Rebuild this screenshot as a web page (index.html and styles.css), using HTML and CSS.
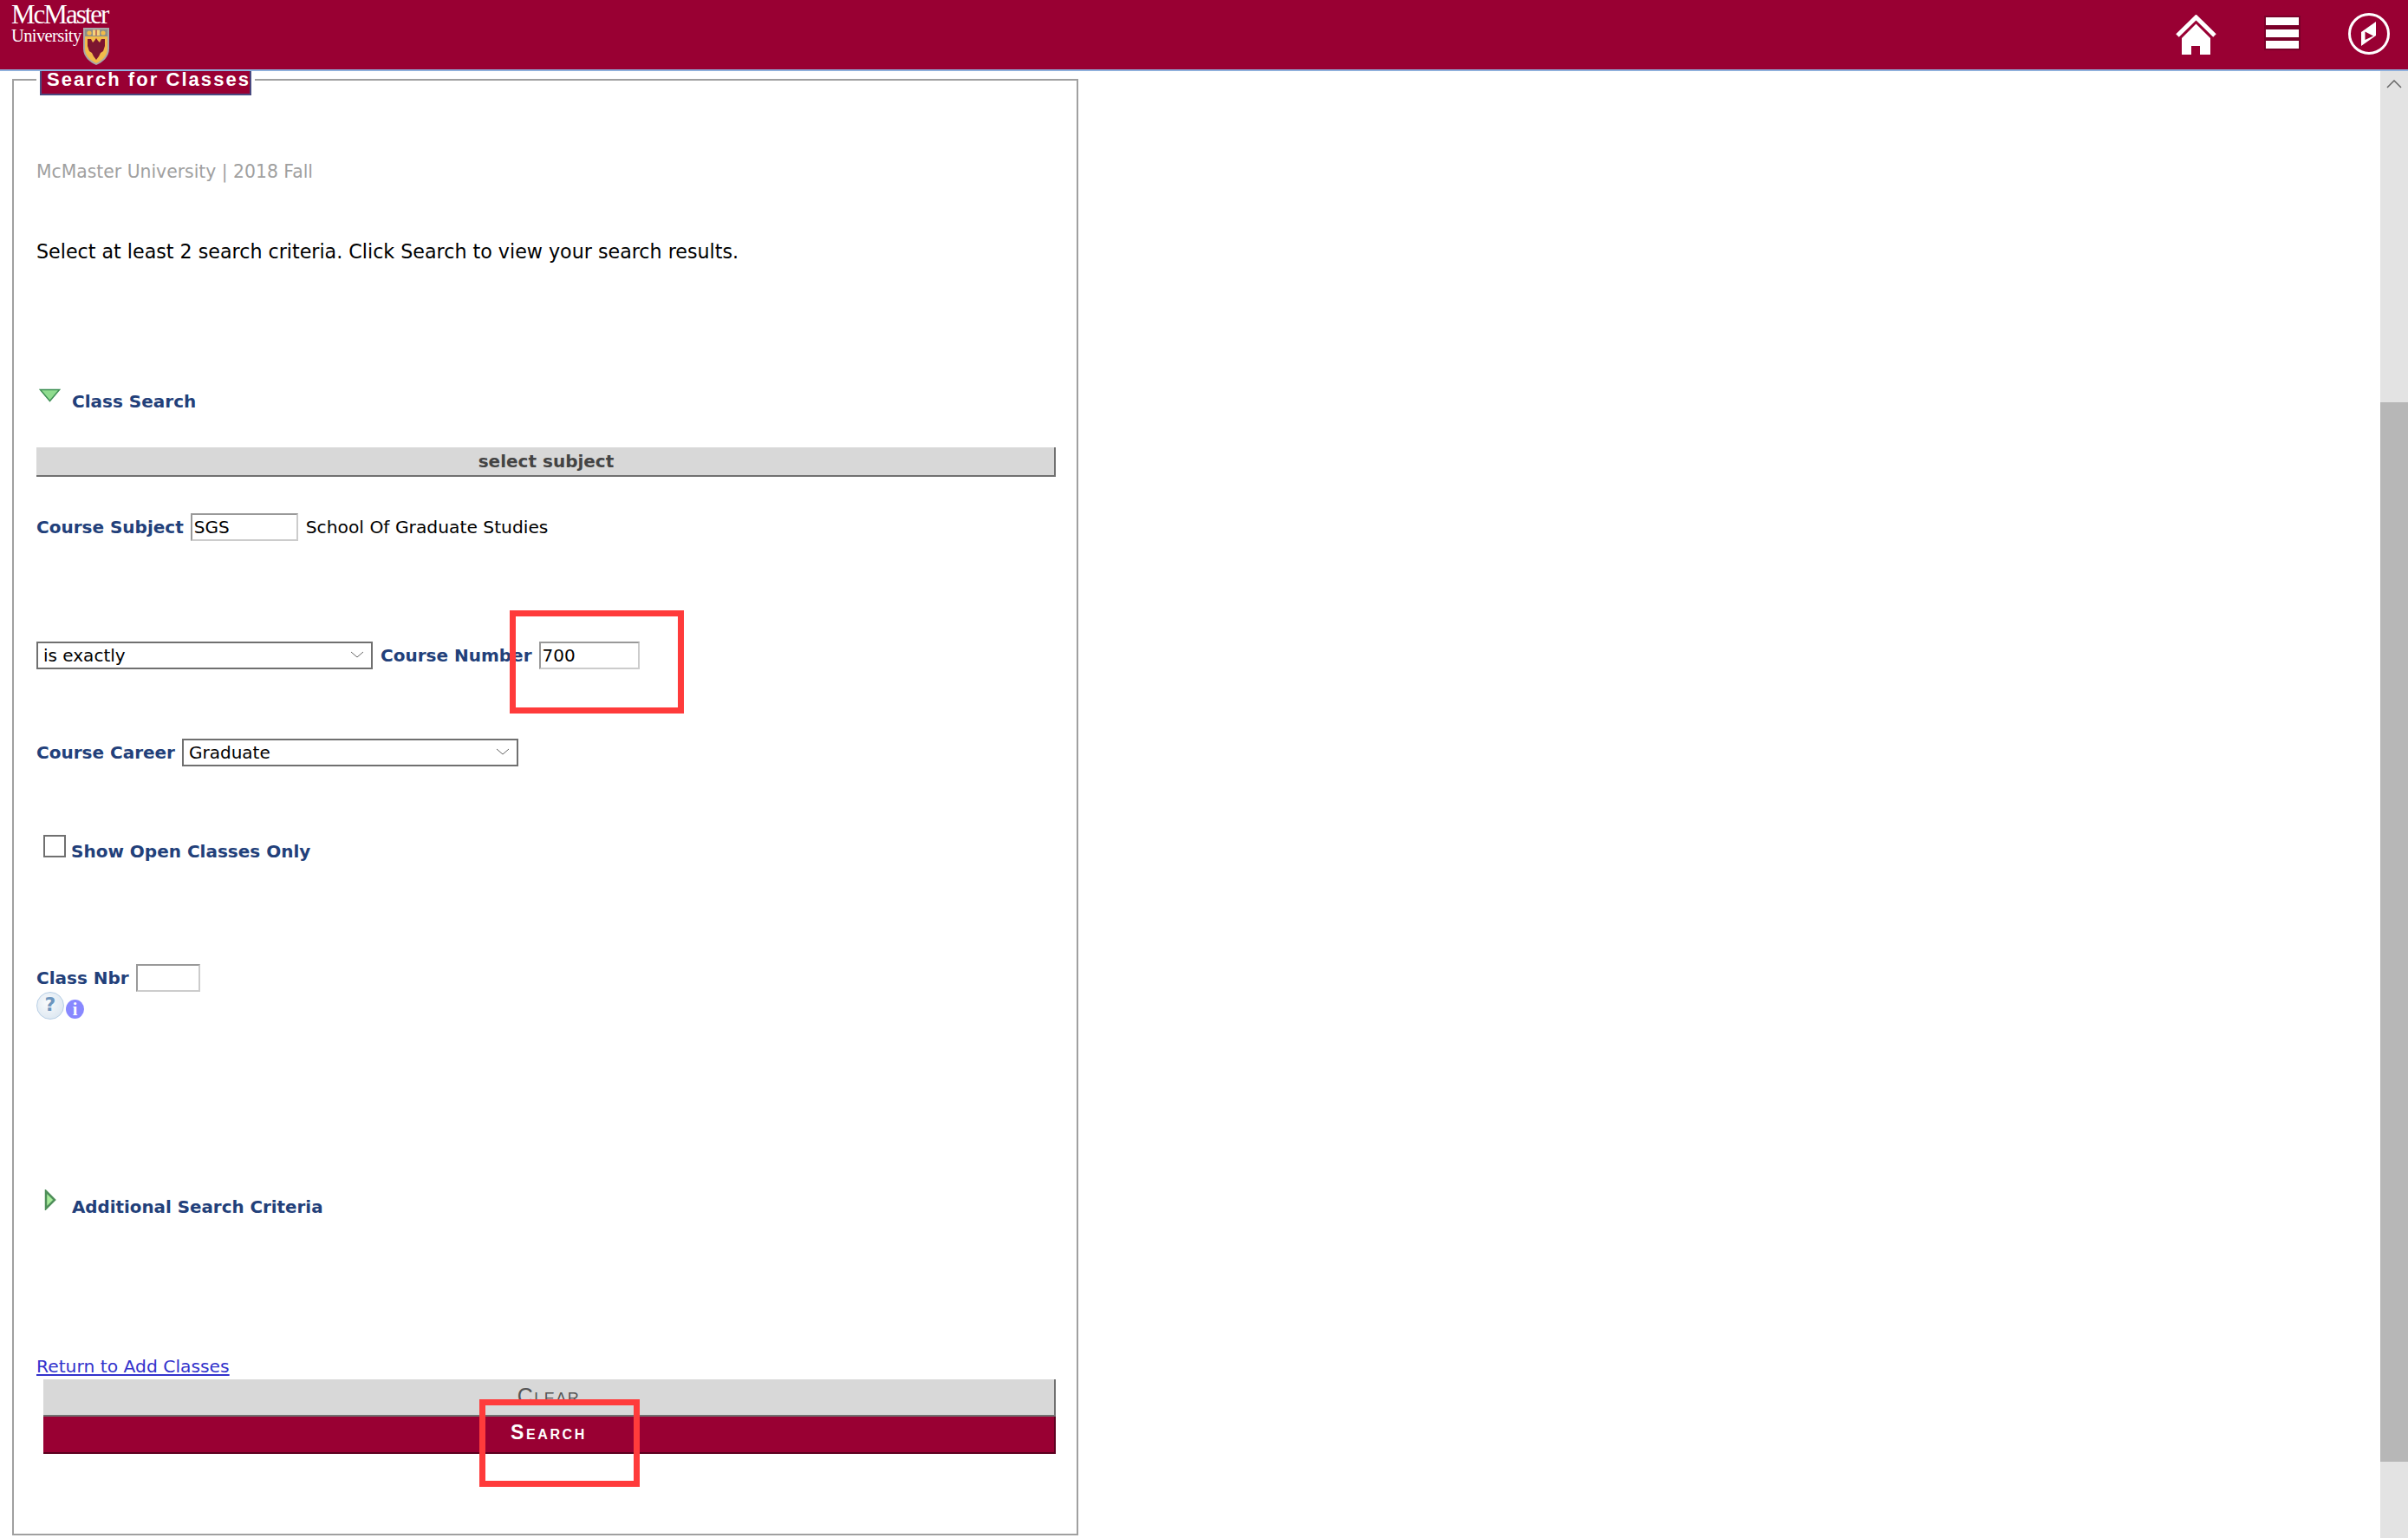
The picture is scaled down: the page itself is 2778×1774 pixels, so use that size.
FILE: index.html
```html
<!DOCTYPE html>
<html lang="en">
<head>
<meta charset="utf-8">
<title>Search for Classes</title>
<link rel="stylesheet" href="styles.css">
</head>
<body>
<header class="topbar">
  <div class="logo">
    <div class="logo-name">McMaster</div>
    <div class="logo-lower">
      <div class="logo-uni">University</div>
      <svg class="shield" viewBox="0 0 30 43" width="30" height="43">
        <path d="M0 0H30V24C30 34 22 40 15 43C8 40 0 34 0 24Z" fill="#a8a8a8"/>
        <path d="M2 2H28V24C28 33 21 38 15 41C9 38 2 33 2 24Z" fill="#f2bb4a"/>
        <path d="M2 2H28V10H2Z" fill="#8f8f86"/>
        <circle cx="7" cy="6" r="2.6" fill="#f2bb4a"/><circle cx="23" cy="6" r="2.6" fill="#f2bb4a"/>
        <path d="M11 2.500H19V9H11Z" fill="#f6d27a"/><path d="M14.500 2.500H15.500V9H14.500Z" fill="#8a1a30"/>
        <path d="M15 12L17 15L19 17L21 13L25 13L25 21L23 27L20 29L18 33L15 37L12 33L10 29L7 27L5 21L5 13L9 13L11 17L13 15Z" fill="#7d1530"/>
      </svg>
    </div>
  </div>
  <nav class="top-icons">
    <svg class="ic-home" viewBox="0 0 47 46" width="47" height="46">
      <path d="M2 24L23.500 3L45 24" fill="none" stroke="#fff" stroke-width="5"/>
      <path d="M7 27L23.500 10.500L40 27V46H28V36H18V46H7Z" fill="#fff"/>
    </svg>
    <div class="ic-menu"><span></span><span></span><span></span></div>
    <svg class="ic-compass" viewBox="0 0 48 48" width="48" height="48">
      <circle cx="24" cy="24" r="22.500" fill="none" stroke="#fff" stroke-width="3"/>
      <path d="M15 22L32 10V26L15 38Z" fill="#fff"/>
      <path d="M19.500 21.500L29 26.500L19.500 31Z" fill="#990033"/>
    </svg>
  </nav>
</header>

<div class="page">
  <main class="content">
    <section class="panel">
      <div class="legend">Search for Classes</div>
      <div class="subtitle">McMaster University | 2018 Fall</div>
      <div class="instr">Select at least 2 search criteria. Click Search to view your search results.</div>

      <div class="row row-class-search">
        <svg class="tri-down" viewBox="0 0 26 16" width="25" height="16" preserveAspectRatio="none">
          <path d="M1.500 1.500H24.500L13 14.500Z" fill="#8fdc8f" stroke="#3f8f55" stroke-width="1.500"/>
        </svg>
        <span class="label">Class Search</span>
      </div>

      <div class="bar">select subject</div>

      <div class="row row-subject">
        <span class="label">Course Subject</span>
        <input class="field f-subject" type="text" value="SGS">
        <span class="plain">School Of Graduate Studies</span>
      </div>

      <div class="row row-number">
        <div class="select-wrap sw-op">
          <select class="sel"><option>is exactly</option></select>
          <svg class="chev" viewBox="0 0 16 8" width="16" height="8"><path d="M1 1L8 7L15 1" fill="none" stroke="#666" stroke-width="1"/></svg>
        </div>
        <span class="label">Course Number</span>
        <input class="field f-number" type="text" value="700">
      </div>

      <div class="row row-career">
        <span class="label">Course Career</span>
        <div class="select-wrap sw-op">
          <select class="sel"><option>Graduate</option></select>
          <svg class="chev" viewBox="0 0 16 8" width="16" height="8"><path d="M1 1L8 7L15 1" fill="none" stroke="#666" stroke-width="1"/></svg>
        </div>
      </div>

      <div class="row row-open">
        <input class="check" type="checkbox">
        <span class="label">Show Open Classes Only</span>
      </div>

      <div class="row row-nbr">
        <span class="label">Class Nbr</span>
        <input class="field f-nbr" type="text">
      </div>
      <div class="row row-help">
        <span class="help">?</span>
        <span class="info">i</span>
      </div>

      <div class="row row-additional">
        <svg class="tri-right" viewBox="0 0 14 24" width="14" height="24">
          <path d="M2 2L12 12L2 22Z" fill="#a8ec9c" stroke="#4f8f5a" stroke-width="2.500"/>
        </svg>
        <span class="label label-add">Additional Search Criteria</span>
      </div>

      <div class="row-link"><a class="link" href="#">Return to Add Classes</a></div>

      <div class="actions">
        <div class="btn btn-clear">Clear</div>
        <div class="btn btn-search">Search</div>
      </div>
    </section>
  </main>
  <aside class="scrollbar">
    <div class="sb-track sb-top">
      <svg class="sb-up" viewBox="0 0 18 10" width="18" height="10"><path d="M1 9L9 1L17 9" fill="none" stroke="#666" stroke-width="1.500"/></svg>
    </div>
    <div class="sb-thumb"></div>
    <div class="sb-track sb-bottom"></div>
  </aside>
</div>

<div class="mark mark-number"></div>
<div class="mark mark-search"></div>
</body>
</html>
```
FILE: styles.css
```css
* { box-sizing: border-box; }
html, body { margin: 0; padding: 0; height: 100%; overflow: hidden; background: #fff; }
body { position: relative; width: 2778px; height: 1774px; font-family: "DejaVu Sans", Verdana, sans-serif; font-size: 20px; color: #000; display: flex; flex-direction: column; }

.topbar { height: 82px; flex: none; background: #990033; border-bottom: 2px solid #8fb0dc; display: flex; justify-content: space-between; }
.logo { padding: 4px 0 0 13px; width: 130px; color: #fff; font-family: "Liberation Serif", serif; }
.logo-name { font-size: 31px; line-height: 26px; letter-spacing: -2px; height: 28px; white-space: nowrap; }
.logo-lower { display: flex; gap: 4px; align-items: flex-start; height: 43px; }
.logo-uni { font-size: 20.5px; line-height: 18px; width: 79px; letter-spacing: -0.6px; white-space: nowrap; }
.shield { flex: none; }
.top-icons { display: flex; align-items: flex-start; }
.ic-home { margin: 17px 55px 0 0; }
.ic-menu { width: 42px; height: 40px; margin: 18px 55px 0 0; display: flex; flex-direction: column; gap: 0; background: #7a0029; padding: 2px; justify-content: space-between; }
.ic-menu span { display: block; height: 9px; background: #fff; }
.ic-compass { margin: 15px 21px 0 0; }

.page { flex: 1; display: flex; min-height: 0; }
.content { flex: 1; padding: 9px 0 0 14px; }
.panel { width: 1230px; height: 1680px; border: 2px solid #a0a0a0; padding: 0 24px 0 26px; }

.legend { width: 244px; height: 28px; margin: -11px 0 0 4px; background: #990033; color: #fff; font-family: "Liberation Sans", Arial, sans-serif; font-weight: 700; font-size: 22px; line-height: 20px; letter-spacing: 2.05px; padding-left: 6px; white-space: nowrap; border: 2px solid #4a4a80; border-top: 0; box-shadow: -4px 0 0 #fff, 4px 0 0 #fff; }
.subtitle { margin-top: 76px; height: 24px; line-height: 24px; color: #a0a0a0; font-size: 20.35px; white-space: nowrap; }
.instr { margin-top: 67px; height: 26px; line-height: 26px; font-size: 22.2px; white-space: nowrap; }

.row { display: flex; align-items: center; }
.label { font-weight: 700; color: #22407a; font-size: 20px; white-space: nowrap; }
.label-add { font-size: 19.85px; }
.plain { font-size: 20.25px; white-space: nowrap; }

.row-class-search { margin-top: 144px; height: 32px; }
.tri-down { align-self: flex-start; margin: 1px 0 0 3px; }
.row-class-search .label { margin-left: 13px; }

.bar { margin-top: 37px; height: 34px; background: #d8d8d8; border-bottom: 2px solid #707070; border-right: 2px solid #707070; text-align: center; font-weight: 700; color: #444; font-size: 20px; line-height: 32px; padding-left: 2px; }

.field { height: 32px; border: 2px solid; border-color: #999 #ccc #ccc #999; background: #fff; padding: 0 2px; font-family: inherit; font-size: 20px; color: #000; outline: 0; border-radius: 0; }
.f-subject { width: 124px; margin-left: 8px; }
.f-number { width: 116px; margin-left: 8px; }
.f-nbr { width: 74px; margin-left: 8px; }

.row-subject { margin-top: 42px; height: 32px; }
.row-subject .plain { margin-left: 9px; }
.row-number { margin-top: 116px; height: 32px; }
.row-number .label { margin-left: 9px; }
.row-career { margin-top: 80px; height: 32px; }
.row-career .select-wrap { margin-left: 8px; }
.select-wrap { position: relative; width: 388px; height: 32px; flex: none; }
.sel { appearance: none; -webkit-appearance: none; width: 100%; height: 100%; border: 2px solid #707070; border-radius: 0; background: #fff; padding: 0 6px; font-family: inherit; font-size: 20px; color: #000; }
.chev { position: absolute; right: 10px; top: 11px; }

.row-open { margin-top: 79px; height: 38px; }
.check { appearance: none; -webkit-appearance: none; width: 26px; height: 26px; border: 2px solid #707070; border-radius: 0; background: #fff; margin: 0 0 0 8px; align-self: flex-start; }
.row-open .label { margin-left: 6px; }

.row-nbr { margin-top: 111px; height: 32px; }
.row-help { height: 32px; align-items: flex-end; gap: 2px; }
.help { width: 32px; height: 32px; border-radius: 50%; border: 1px solid #b8cfe6; background: radial-gradient(circle at 40% 40%, #f8fafc, #d5e2ee); color: #6d95bd; font-weight: 700; font-size: 22px; line-height: 28px; text-align: center; }
.info { width: 21px; height: 22px; margin-bottom: 1px; border-radius: 50%; background: #8888ff; color: #fff; font-family: "Liberation Serif", serif; font-weight: 700; font-size: 20px; line-height: 22px; text-align: center; }

.row-additional { margin-top: 196px; height: 40px; }
.tri-right { align-self: flex-start; margin-left: 9px; }
.row-additional .label { margin-left: 18px; }

.row-link { margin-top: 152px; height: 27px; line-height: 24px; font-size: 20.3px; }
.link { color: #3333cc; text-decoration: underline; }

.actions { margin-left: 8px; width: 1168px; }
.btn { height: 43px; text-align: center; font-variant: small-caps; font-family: "Liberation Sans", Arial, sans-serif; }
.btn-clear { background: #d8d8d8; color: #555; border-bottom: 2px solid #707070; border-right: 2px solid #707070; font-size: 25px; line-height: 38px; letter-spacing: 1.5px; }
.btn-search { background: #990033; color: #fff; border-bottom: 2px solid #5c001f; border-right: 2px solid #5c001f; font-weight: 700; font-size: 23px; line-height: 36px; letter-spacing: 2.6px; }

.scrollbar { width: 32px; flex: none; display: flex; flex-direction: column; }
.sb-track { background: #e3e3e3; }
.sb-top { height: 382px; padding: 10px 0 0 7px; }
.sb-up { display: block; }
.sb-thumb { height: 1222px; background: #b7b7b7; }
.sb-bottom { flex: 1; }

.mark { position: absolute; border: 7px solid #ff3b3b; }
.mark-number { left: 588px; top: 704px; width: 201px; height: 119px; }
.mark-search { left: 553px; top: 1614px; width: 185px; height: 101px; }
```
